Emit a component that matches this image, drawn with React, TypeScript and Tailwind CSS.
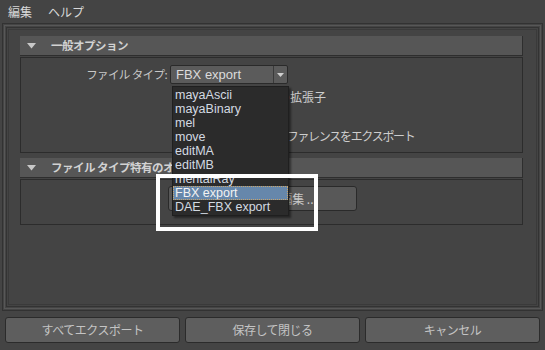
const jp = "font-['Noto_Sans_CJK_JP',sans-serif]";
const latin = "font-['Liberation_Sans','Noto_Sans_CJK_JP',sans-serif]";

const fileTypes = [
  "mayaAscii",
  "mayaBinary",
  "mel",
  "move",
  "editMA",
  "editMB",
  "mentalRay",
  "FBX export",
  "DAE_FBX export",
];

function Triangle() {
  return (
    <svg width="9" height="6" viewBox="0 0 9 6" className="shrink-0">
      <path d="M0 0 H9 L4.5 5.5 Z" fill="#c8c8c8" />
    </svg>
  );
}

function SectionHeader({ label }: { label: string }) {
  return (
    <div className="flex items-center h-[20px] bg-[#565656] border-b border-r border-[#2e2e2e] pl-[7px]">
      <Triangle />
      <span className="ml-[15px] font-bold text-[11.5px] text-[#d2d2d2] tracking-[-0.5px]">
        {label}
      </span>
    </div>
  );
}

export default function App() {
  const selected = "FBX export";

  return (
    <div
      className={`relative w-[545px] h-[350px] overflow-hidden bg-[#444444] text-[#cfcfcf] ${jp}`}
    >
      {/* menu */}
      <div className="flex items-center gap-[16px] h-[23px] pl-[8px] text-[12px] text-[#d8d8d8]">
        <span>編集</span>
        <span>ヘルプ</span>
      </div>

      {/* framed scroll area */}
      <div className="mx-[2px] h-[288px] border border-[#323232] p-px">
        <div className="h-full border border-[#575757] p-px">
          <div className="h-full border border-[#333333] p-px">
            <div className="h-full border border-[#3a3a3a] pl-[11px] pr-[13px] pt-[6px]">
              <SectionHeader label="一般オプション" />
              <div className="mt-[1px] h-[96px] border border-[#2c2c2c] pt-[7px]">
                <div className="flex items-center h-[19px]">
                  <span className="w-[146px] text-right text-[11.5px] text-[#c8c8c8] tracking-[-0.6px]">
                    ファイル タイプ:
                  </span>
                  <div className="flex ml-[3px] w-[118px] h-[19px] bg-[#5b5b5b] border border-[#2a2a2a] rounded-[2px]">
                    <span
                      className={`flex-1 pl-[5px] leading-[17px] text-[13px] text-[#dcdcdc] ${latin}`}
                    >
                      {selected}
                    </span>
                    <span className="flex justify-center items-center border-l border-[#3a3a3a] w-[14px]">
                      <svg width="7" height="4" viewBox="0 0 7 4">
                        <path d="M0 0 H7 L3.5 4 Z" fill="#d0d0d0" />
                      </svg>
                    </span>
                  </div>
                </div>
                <div className="mt-[6px] ml-[233px] h-[14px] leading-[14px] text-[12px] text-[#cdcdcd]">
                  既定の拡張子
                </div>
                <div className="mt-[25px] ml-[255px] h-[14px] leading-[14px] text-[12px] text-[#cdcdcd] tracking-[-1.3px]">
                  リファレンスをエクスポート
                </div>
              </div>

              <div className="mt-[5px]">
                <SectionHeader label="ファイル タイプ特有のオプション" />
              </div>
              <div className="flex mt-[1px] h-[46px] border border-[#2c2c2c] pt-[6px] pl-[147px]">
                <div className="flex justify-center items-center w-[189px] h-[25px] bg-[#585858] border border-[#2a2a2a] rounded-[3px] text-[12px] text-[#c8c8c8]">
                  プリセットの編集 ...
                </div>
              </div>
            </div>
          </div>
        </div>
      </div>

      {/* bottom buttons */}
      <div className="grid grid-cols-3 gap-[5px] mt-[6px] px-[5px]">
        {["すべてエクスポート", "保存して閉じる", "キャンセル"].map((label) => (
          <button
            key={label}
            type="button"
            className="h-[26px] bg-[#5e5e5e] border border-[#2b2b2b] rounded-[3px] text-[12px] text-[#c4c4c4] tracking-[-0.5px]"
          >
            {label}
          </button>
        ))}
      </div>

      {/* open dropdown list */}
      <div
        className={`absolute left-[172px] top-[86px] w-[117px] bg-[#2b2b2b] border border-[#1f1f1f] py-px shadow-[2px_2px_2px_rgba(0,0,0,0.45)] ${latin}`}
      >
        {fileTypes.map((type) => (
          <div
            key={type}
            className={`h-[14px] pl-[2px] leading-[14px] text-[12.5px] ${
              type === selected
                ? "bg-[#6687ab] text-[#f2f2f2] outline-1 outline-dotted outline-offset-[-1px] outline-[#c9a46a]"
                : "text-[#d3dae2]"
            }`}
          >
            {type}
          </div>
        ))}
      </div>

      {/* annotation box */}
      <div className="absolute left-[156px] top-[174px] w-[162px] h-[57px] border-4 border-white" />
    </div>
  );
}
